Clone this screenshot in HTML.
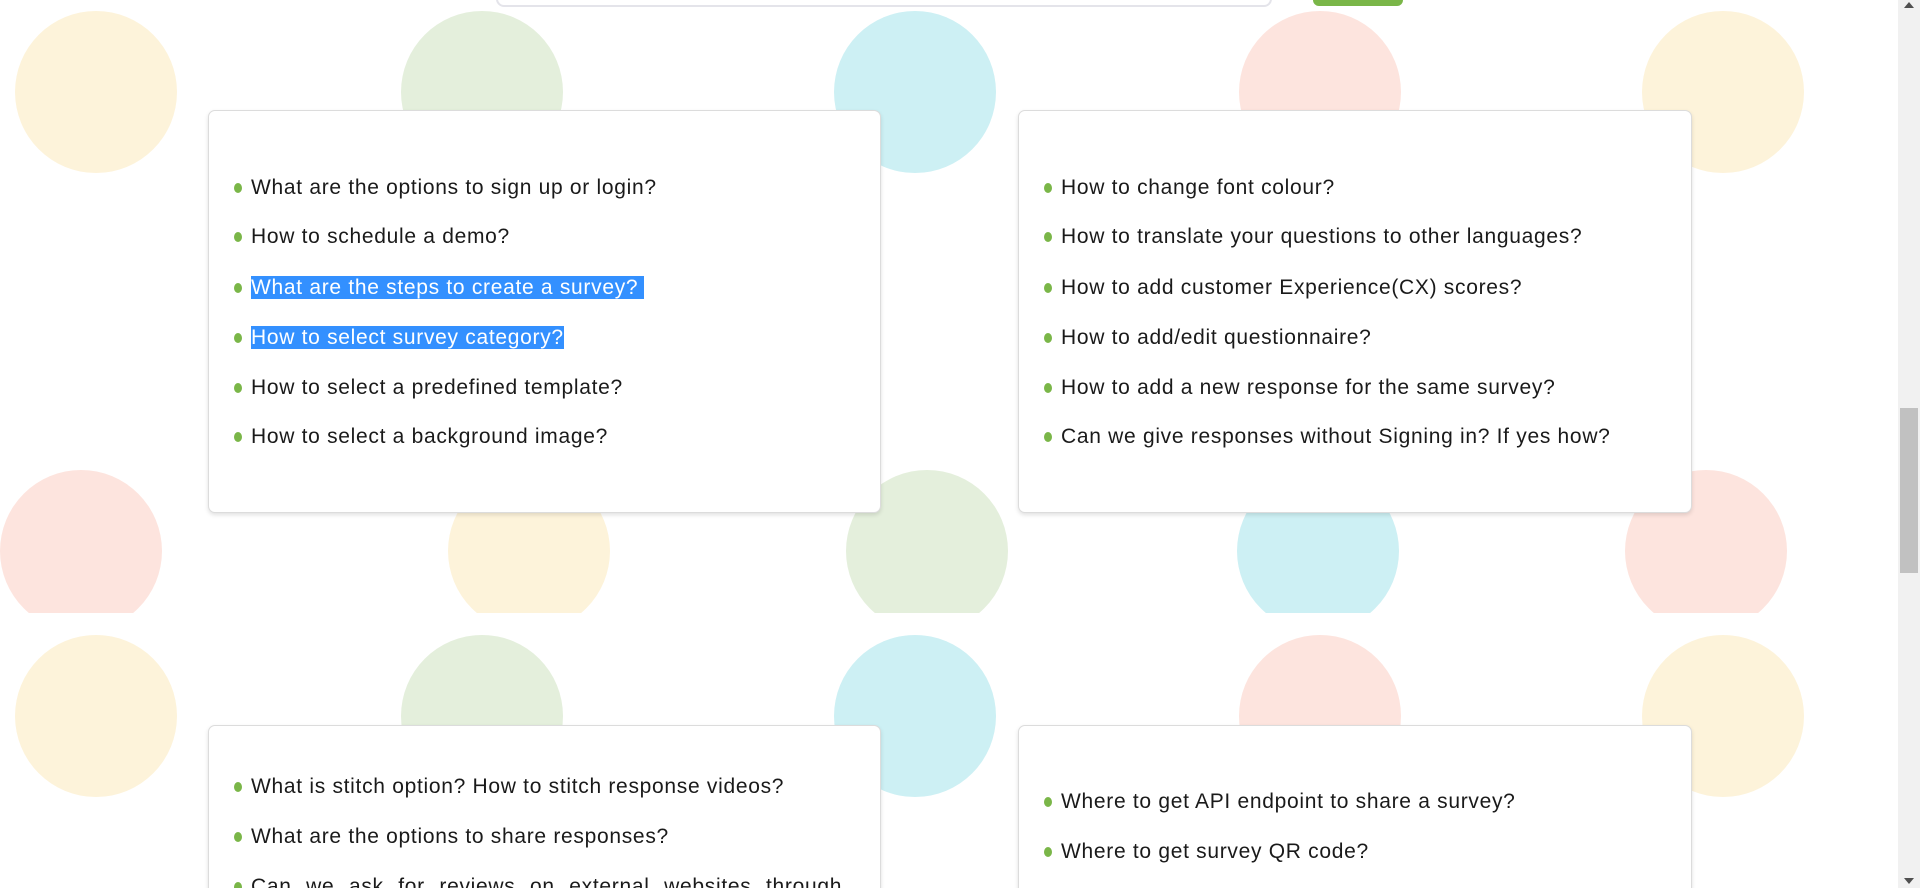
<!DOCTYPE html>
<html><head><meta charset="utf-8"><style>
*{margin:0;padding:0;box-sizing:border-box}
html,body{width:1920px;height:888px;overflow:hidden}
body{background:#fff;position:relative;font-family:"Liberation Sans",sans-serif;color:#1a1a1a}
#w{position:absolute;left:0;top:0;width:1920px;height:888px;overflow:hidden}
.c{position:absolute;border-radius:50%;width:162px;height:162px}
.y{background:#fdf3da}.g{background:#e4efdc}.b{background:#cdf0f4}.p{background:#fde4de}
.card{position:absolute;background:#fff;border:1px solid #dcdcdc;border-radius:7px;box-shadow:0 2px 4px rgba(0,0,0,.12)}
.it{position:absolute;left:42px;font-size:21px;letter-spacing:0.7px;line-height:28px;white-space:nowrap}
.it:before{content:"";position:absolute;left:-17px;top:9px;width:8px;height:10px;border-radius:50%;background:#7ab648}
.hl{background:#3390ff;color:#fff;padding-right:6px}
</style></head><body><div id="w">
<div style="position:absolute;left:496px;top:-20px;width:776px;height:27px;border:2px solid #e4e4ea;border-radius:8px;background:#fff"></div>
<div style="position:absolute;left:1313px;top:-10px;width:90px;height:16px;background:#7ab648;border-radius:6px"></div>

<div class="c y" style="left:15px;top:11px"></div>
<div class="c g" style="left:401px;top:11px"></div>
<div class="c b" style="left:834px;top:11px"></div>
<div class="c p" style="left:1239px;top:11px"></div>
<div class="c y" style="left:1642px;top:11px"></div>

<div style="position:absolute;left:0;top:0;width:1898px;height:613px;overflow:hidden">
<div class="c p" style="left:0px;top:470px"></div>
<div class="c y" style="left:448px;top:470px"></div>
<div class="c g" style="left:846px;top:470px"></div>
<div class="c b" style="left:1237px;top:470px"></div>
<div class="c p" style="left:1625px;top:470px"></div>
</div>

<div class="c y" style="left:15px;top:635px"></div>
<div class="c g" style="left:401px;top:635px"></div>
<div class="c b" style="left:834px;top:635px"></div>
<div class="c p" style="left:1239px;top:635px"></div>
<div class="c y" style="left:1642px;top:635px"></div>

<div class="card" style="left:208px;top:110px;width:673px;height:403px">
<div class="it" style="top:63px">What are the options to sign up or login?</div>
<div class="it" style="top:112px">How to schedule a demo?</div>
<div class="it" style="top:163px"><span class="hl">What are the steps to create a survey?</span></div>
<div class="it" style="top:213px"><span class="hl" style="padding-right:0">How to select survey category?</span></div>
<div class="it" style="top:263px">How to select a predefined template?</div>
<div class="it" style="top:312px">How to select a background image?</div>
</div>

<div class="card" style="left:1018px;top:110px;width:674px;height:403px">
<div class="it" style="top:63px">How to change font colour?</div>
<div class="it" style="top:112px">How to translate your questions to other languages?</div>
<div class="it" style="top:163px">How to add customer Experience(CX) scores?</div>
<div class="it" style="top:213px">How to add/edit questionnaire?</div>
<div class="it" style="top:263px">How to add a new response for the same survey?</div>
<div class="it" style="top:312px">Can we give responses without Signing in? If yes how?</div>
</div>

<div class="card" style="left:208px;top:725px;width:673px;height:200px">
<div class="it" style="top:47px">What is stitch option? How to stitch response videos?</div>
<div class="it" style="top:97px">What are the options to share responses?</div>
<div class="it" style="top:147px;word-spacing:8px">Can we ask for reviews on external websites through</div>
</div>

<div class="card" style="left:1018px;top:725px;width:674px;height:200px">
<div class="it" style="top:62px">Where to get API endpoint to share a survey?</div>
<div class="it" style="top:112px">Where to get survey QR code?</div>
</div>

<div style="position:absolute;left:1898px;top:0;width:22px;height:888px;background:#f1f1f1"></div>
<div style="position:absolute;left:1900px;top:408px;width:18px;height:165px;background:#c1c1c1"></div>
<div style="position:absolute;left:1904px;top:2px;width:0;height:0;border-left:5px solid transparent;border-right:5px solid transparent;border-bottom:6px solid #505050"></div>
<div style="position:absolute;left:1904px;top:878px;width:0;height:0;border-left:5px solid transparent;border-right:5px solid transparent;border-top:6px solid #505050"></div>
</div></body></html>
